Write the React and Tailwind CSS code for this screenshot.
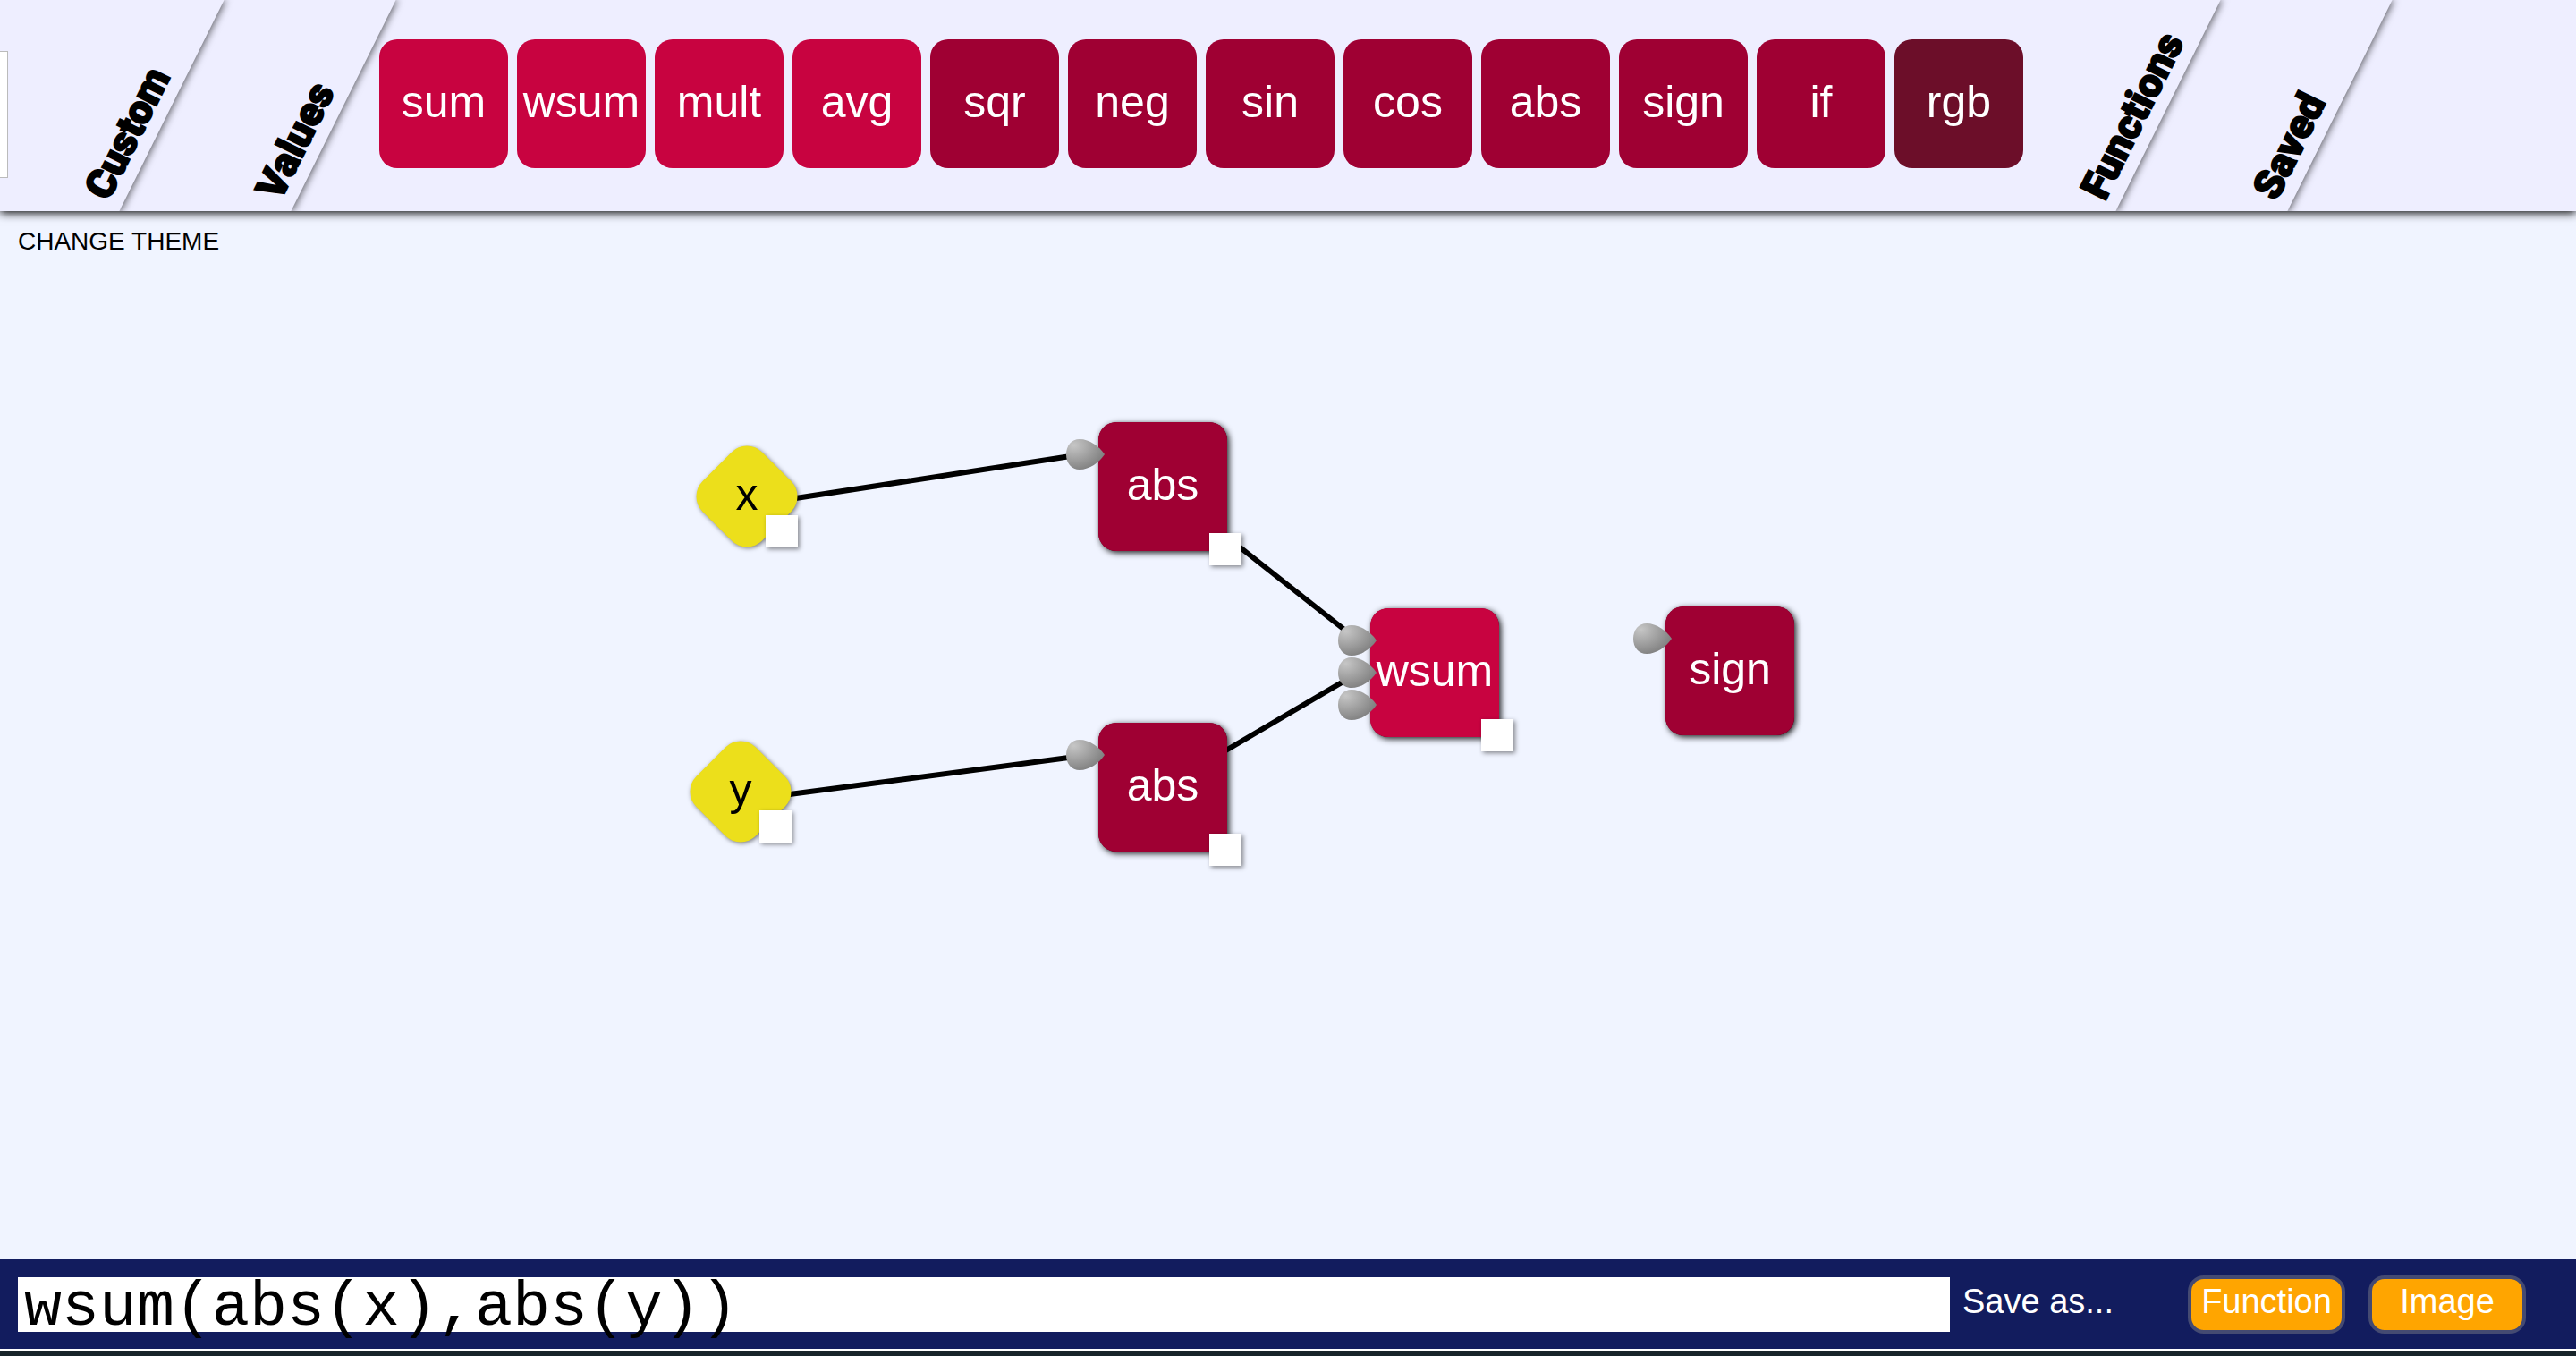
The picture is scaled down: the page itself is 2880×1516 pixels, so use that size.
import React from "react";

const TILES = [
  ["sum", "bg-[#c80340]"],
  ["wsum", "bg-[#c80340]"],
  ["mult", "bg-[#c80340]"],
  ["avg", "bg-[#c80340]"],
  ["sqr", "bg-[#9f0033]"],
  ["neg", "bg-[#9f0033]"],
  ["sin", "bg-[#9f0033]"],
  ["cos", "bg-[#9f0033]"],
  ["abs", "bg-[#9f0033]"],
  ["sign", "bg-[#9f0033]"],
  ["if", "bg-[#9f0033]"],
  ["rgb", "bg-[#6c0e29]"],
];

function Drawer({ label, className, children }) {
  return (
    <section className={`relative flex ${className}`}>
      <div className="absolute inset-y-0 -left-40 right-0 -skew-x-[26.4deg] bg-[#eeeeff] shadow-[2px_0_8px_rgba(0,0,0,0.6)]" />
      {children}
      <button
        type="button"
        className="absolute bottom-0 left-[calc(100%-59px)] origin-bottom-left rotate-[-63.6deg] pl-1 font-['Roboto',sans-serif] text-[45px] leading-[60px] font-black whitespace-nowrap text-black [-webkit-text-stroke:2px_black]"
      >
        {label}
      </button>
    </section>
  );
}

function Inlet() {
  return (
    <svg width="44" height="34" viewBox="0 0 44 34" className="block">
      <defs>
        <radialGradient id="inlet" cx="0.2" cy="0.2" r="0.9">
          <stop offset="0" stopColor="#c6c6c6" />
          <stop offset="1" stopColor="#7c7c7c" />
        </radialGradient>
      </defs>
      <path
        d="M0 17C0 7 6 0 15 0C26 0 37 8 43 17C37 26 26 34 15 34C6 34 0 27 0 17Z"
        fill="url(#inlet)"
      />
    </svg>
  );
}

function Outlet() {
  return <div className="size-9 bg-white shadow-[2px_2px_5px_rgba(0,0,0,0.45)]" />;
}

function FunctionNode({ label, className, inlets = 1, outlet = true }) {
  return (
    <div className={`absolute size-36 ${className}`}>
      <div className="flex size-full items-center justify-center rounded-[20px] bg-inherit pb-1 text-[50px] text-white shadow-[2px_2px_7px_rgba(0,0,0,0.9)]">
        {label}
      </div>
      <div className="absolute top-[19px] -left-9 flex flex-col gap-0.5">
        {Array.from({ length: inlets }, (_, i) => (
          <Inlet key={i} />
        ))}
      </div>
      {outlet && (
        <div className="absolute -right-4 -bottom-4">
          <Outlet />
        </div>
      )}
    </div>
  );
}

function ValueNode({ label, className }) {
  return (
    <div className={`absolute flex size-[114px] items-center justify-center ${className}`}>
      <div className="absolute size-[94px] rotate-45 rounded-[24px] bg-[#ecdf1b] shadow-[2px_0_5px_rgba(0,0,0,0.5)]" />
      <span className="relative pb-1 text-[50px] text-black">{label}</span>
      <div className="absolute right-0 bottom-0">
        <Outlet />
      </div>
    </div>
  );
}

export default function App() {
  return (
    <div className="flex min-h-screen flex-col bg-[#f0f4ff] font-['Liberation_Sans',Arial,sans-serif] text-black">
      <header className="relative z-10 shadow-[0_2px_10px_#000]">
        <div className="flex h-[236px] overflow-hidden bg-[#eeeeff]">
          <Drawer label="Custom" className="z-40 w-48">
            <div className="relative mt-[57px] h-[142px] w-[9px] border border-l-0 border-[#bbbbbb] bg-white" />
          </Drawer>
          <Drawer label="Values" className="z-30 w-48" />
          <Drawer label="Functions" className="z-20 flex-1">
            <div className="relative flex gap-2.5 pt-11 pl-10">
              {TILES.map(([name, color]) => (
                <button
                  key={name}
                  type="button"
                  className={`flex size-36 items-center justify-center rounded-[20px] pb-1 text-[50px] text-white ${color}`}
                >
                  {name}
                </button>
              ))}
            </div>
          </Drawer>
          <Drawer label="Saved" className="z-10 w-48" />
          <div className="w-[264px]" />
        </div>
      </header>

      <main className="relative flex-1 overflow-hidden">
        <button type="button" className="mt-3.5 ml-5 block text-[28px] leading-10">
          CHANGE THEME
        </button>
        <svg className="absolute top-0 left-0 size-full" stroke="#000" strokeWidth="6">
          <line x1="870" y1="324" x2="1210" y2="272" />
          <line x1="860" y1="655" x2="1210" y2="609" />
          <line x1="1370" y1="363" x2="1512" y2="475" />
          <line x1="1350" y1="615" x2="1512" y2="520" />
        </svg>
        <ValueNode label="x" className="top-[262px] left-[778px]" />
        <ValueNode label="y" className="top-[592px] left-[771px]" />
        <FunctionNode label="abs" className="top-[236px] left-[1228px] rounded-[20px] bg-[#9f0033]" />
        <FunctionNode label="abs" className="top-[572px] left-[1228px] rounded-[20px] bg-[#9f0033]" />
        <FunctionNode label="wsum" inlets={3} className="top-[444px] left-[1532px] rounded-[20px] bg-[#c80340]" />
        <FunctionNode label="sign" outlet={false} className="top-[442px] left-[1862px] rounded-[20px] bg-[#9f0033]" />
      </main>

      <footer>
        <div className="flex h-[101px] items-center border-t border-[#4a5183] bg-[#121c5e] pr-14 pl-5 text-[38px] text-white">
          <div className="flex h-[61px] flex-1 items-center bg-white">
            <input
              type="text"
              aria-label="Formula"
              defaultValue="wsum(abs(x),abs(y))"
              className="h-[84px] w-full shrink-0 bg-transparent pt-2 pl-[7px] font-['Liberation_Mono',monospace] text-[70px] text-black outline-none"
            />
          </div>
          <span className="w-[266px] pb-1.5 pl-3.5">Save as...</span>
          <div className="flex gap-[26px]">
            <button type="button" className="flex h-[65px] w-44 items-center justify-center rounded-[18px] border-4 border-[#444a72] bg-[#ffa500] pb-1.5 leading-[50px]">
              Function
            </button>
            <button type="button" className="flex h-[65px] w-44 items-center justify-center rounded-[18px] border-4 border-[#444a72] bg-[#ffa500] pb-1.5 leading-[50px]">
              Image
            </button>
          </div>
        </div>
        <div className="h-2 border-t-2 border-white bg-[#18242a]" />
      </footer>
    </div>
  );
}
